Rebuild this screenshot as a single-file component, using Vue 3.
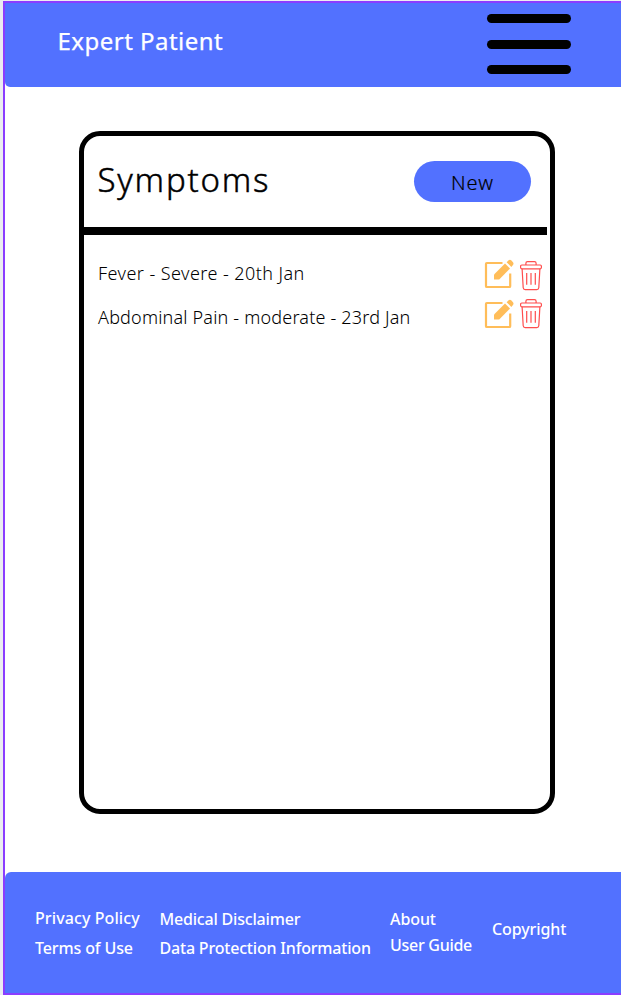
<script setup>
const symptoms = [
  { text: 'Fever - Severe - 20th Jan', name: 'fever' },
  { text: 'Abdominal Pain - moderate - 23rd Jan', name: 'pain' },
]
</script>

<template>
  <div class="page">
    <header class="topbar">
      <h1 class="brand">Expert Patient</h1>
      <div class="menu"><span></span><span></span><span></span></div>
    </header>
    <main class="content">
      <section class="card">
        <div class="card-head">
          <h2 class="title">Symptoms</h2>
          <button class="new"><span>New</span></button>
        </div>
        <div class="divider"></div>
        <ul class="list">
          <li v-for="s in symptoms" :key="s.name" :class="['row', s.name]">
            <span class="label">{{ s.text }}</span>
            <svg class="edit" width="30" height="30" viewBox="0 0 30 30">
              <path d="M18.500 4H2.800Q2 4 2 4.800V27.200Q2 28 2.800 28H25.400Q26.200 28 26.200 27.200V14.500" fill="none" stroke="#ffbd59" stroke-width="2.200" />
              <path d="M10 15.400 21 4.600 26 9.600 15.200 20.600H10Z" fill="#ffbd59" />
              <path d="M22.600 3.200 24.600 1.300Q25.900 .3 27.200 1.300L29 3.300Q30 4.600 29 5.900L27.300 7.900Z" fill="#ffbd59" />
            </svg>
            <svg class="trash" width="24" height="32" viewBox="0 0 24 32" fill="none" stroke="#ff4d4d" stroke-width="1.200">
              <path d="M6.900 5V3.200Q6.900 1.600 8.500 1.600H15.500Q17.100 1.600 17.100 3.200V5" />
              <rect x="1.600" y="5" width="20.800" height="3.800" rx="1.200" />
              <path d="M3.100 8.800 4.200 27.800Q4.400 29.700 6.200 29.700H17.800Q19.600 29.700 19.800 27.800L20.900 8.800" />
              <path d="M7.700 13V24.800M12 13V24.800M16.300 13V24.800" />
            </svg>
          </li>
        </ul>
      </section>
    </main>
    <footer class="footer">
      <div class="col legal"><a>Privacy Policy</a><a class="terms">Terms of Use</a></div>
      <div class="col data"><a>Medical Disclaimer</a><a>Data Protection Information</a></div>
      <div class="col about"><a>About</a><a class="guide">User Guide</a></div>
      <div class="col copy"><a>Copyright</a></div>
    </footer>
  </div>
</template>

<style>
body {
  background: #ebecf0;
  overflow: hidden;
}
</style>

<style scoped>
.page {
  box-sizing: border-box;
  height: 994px;
  margin: 1px 0 0 3px;
  border: 2px solid #8b3dff;
  border-right: 0;
  background: #fff;
  display: flex;
  flex-direction: column;
  font-family: "Noto Sans", sans-serif;
}
.topbar {
  height: 84px;
  box-sizing: border-box;
  background: #5271ff;
  border-bottom-left-radius: 5px;
  display: flex;
  justify-content: space-between;
  padding: 11px 50px 0 52.500px;
}
.brand {
  margin: 12px 0 0;
  font-size: 24px;
  line-height: 30px;
  font-weight: 400;
  letter-spacing: 0.480px;
  -webkit-text-stroke: 0.250px #fff;
  color: #fff;
  white-space: nowrap;
}
.menu {
  width: 84px;
  height: 60px;
  display: flex;
  flex-direction: column;
  justify-content: space-between;
}
.menu span {
  height: 9px;
  border-radius: 5px;
  background: #000;
}
.content {
  flex: 1;
  padding: 43.500px 0 0 74px;
}
.card {
  box-sizing: border-box;
  width: 476px;
  height: 683.500px;
  border: 5px solid #000;
  border-radius: 21px;
}
.card-head {
  height: 91px;
  display: flex;
  justify-content: space-between;
  padding: 0 19px 0 14px;
}
.title {
  margin: 23px 0 0 -0.500px;
  height: 42px;
  font-size: 33px;
  line-height: 42px;
  font-weight: 300;
  letter-spacing: 1.800px;
  -webkit-text-stroke: 0.450px #000;
}
.new {
  margin: 25px 0 0;
  width: 117px;
  height: 41.500px;
  border: 0;
  padding: 3px 0 0;
  border-radius: 21px;
  background: #5271ff;
  font: 300 20px/38px "Noto Sans", sans-serif;
  letter-spacing: 1px;
  -webkit-text-stroke: 0.200px #000;
  color: #000;
}
.divider {
  width: 463px;
  height: 8px;
  background: #000;
}
.list {
  list-style: none;
  margin: 0;
  padding: 24.500px 7px 0 14px;
}
.row {
  display: flex;
  align-items: flex-start;
}
.row.fever {
  height: 39px;
}
.label {
  flex: 1;
  font-size: 18px;
  line-height: 28px;
  font-weight: 300;
  white-space: nowrap;
}
.fever .label {
  letter-spacing: 0.430px;
}
.pain .label {
  padding-top: 5px;
  letter-spacing: 0.190px;
}
.edit {
  margin-right: 5px;
}
.trash {
  margin-top: 1px;
}
.pain .trash {
  margin-top: 0;
}
.pain .edit {
  margin-top: 1px;
}
.footer {
  height: 121px;
  box-sizing: border-box;
  background: #5271ff;
  border-top-left-radius: 6px;
  display: flex;
  padding: 34px 0 0 30px;
}
.col {
  display: flex;
  flex-direction: column;
  gap: 6px;
  font-size: 16px;
  line-height: 24px;
  font-weight: 500;
  color: #fff;
  white-space: nowrap;
}
.legal {
  width: 124.500px;
  letter-spacing: 0.100px;
}
.terms {
  letter-spacing: -0.120px;
}
.data {
  width: 230.500px;
  padding-top: 1px;
  gap: 5px;
  letter-spacing: -0.190px;
}
.about {
  width: 102px;
  padding-top: 1px;
  gap: 2px;
  letter-spacing: -0.100px;
}
.guide {
  letter-spacing: -0.280px;
}
.copy {
  padding-top: 11px;
  letter-spacing: -0.100px;
}
</style>
